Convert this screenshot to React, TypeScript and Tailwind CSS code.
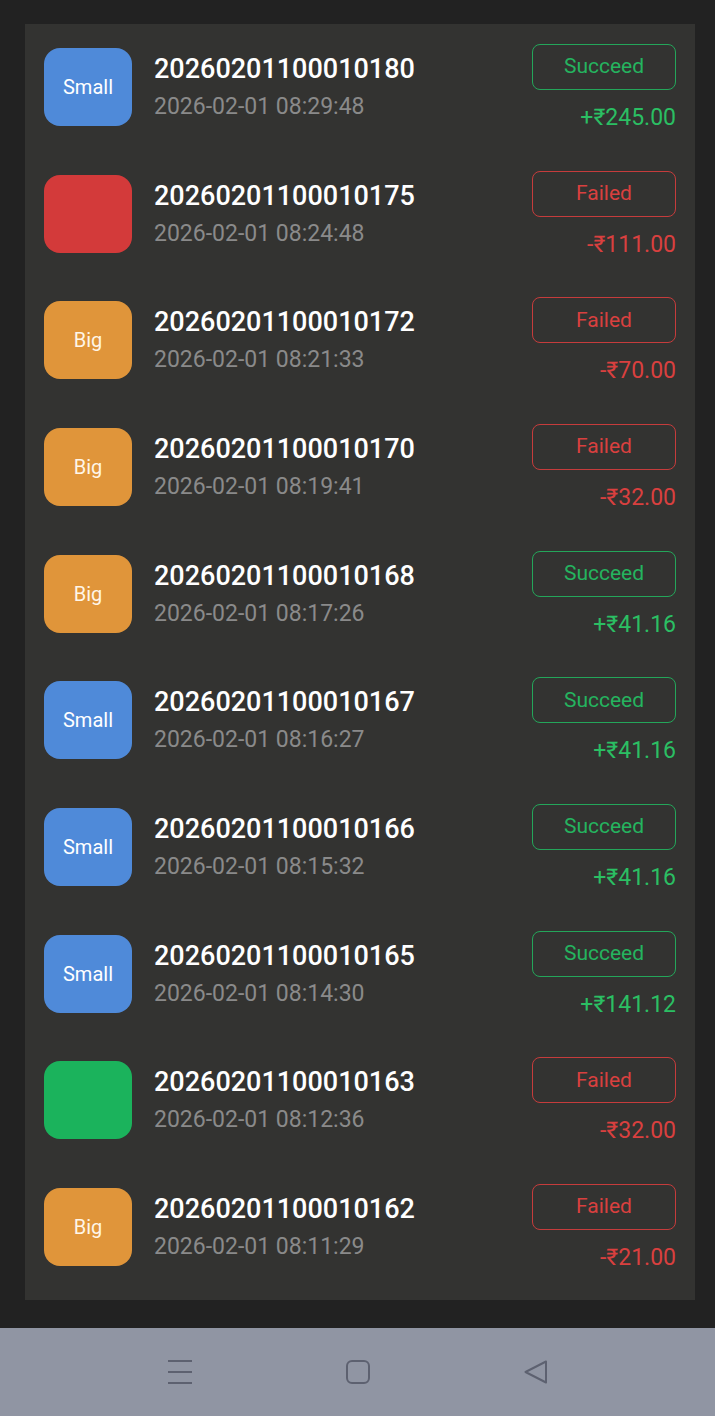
const rows = [
  { id: "20260201100010180", time: "2026-02-01 08:29:48", kind: "small", ok: true, amount: "+₹245.00" },
  { id: "20260201100010175", time: "2026-02-01 08:24:48", kind: "red", ok: false, amount: "-₹111.00" },
  { id: "20260201100010172", time: "2026-02-01 08:21:33", kind: "big", ok: false, amount: "-₹70.00" },
  { id: "20260201100010170", time: "2026-02-01 08:19:41", kind: "big", ok: false, amount: "-₹32.00" },
  { id: "20260201100010168", time: "2026-02-01 08:17:26", kind: "big", ok: true, amount: "+₹41.16" },
  { id: "20260201100010167", time: "2026-02-01 08:16:27", kind: "small", ok: true, amount: "+₹41.16" },
  { id: "20260201100010166", time: "2026-02-01 08:15:32", kind: "small", ok: true, amount: "+₹41.16" },
  { id: "20260201100010165", time: "2026-02-01 08:14:30", kind: "small", ok: true, amount: "+₹141.12" },
  { id: "20260201100010163", time: "2026-02-01 08:12:36", kind: "green", ok: false, amount: "-₹32.00" },
  { id: "20260201100010162", time: "2026-02-01 08:11:29", kind: "big", ok: false, amount: "-₹21.00" },
];

function Tile({ kind }: { kind: string }) {
  if (kind === "small")
    return (
      <div className="flex h-[78px] w-[88px] shrink-0 items-center justify-center rounded-[16px] bg-[#4f8ad9] text-[20px] text-white">
        Small
      </div>
    );
  if (kind === "big")
    return (
      <div className="flex h-[78px] w-[88px] shrink-0 items-center justify-center rounded-[16px] bg-[#e0953a] text-[20px] text-[#fff6e8]">
        Big
      </div>
    );
  if (kind === "red") return <div className="h-[78px] w-[88px] shrink-0 rounded-[16px] bg-[#d33a3a]" />;
  return <div className="h-[78px] w-[88px] shrink-0 rounded-[16px] bg-[#1bb35c]" />;
}

export default function App() {
  return (
    <div className="flex h-[1416px] w-[715px] flex-col bg-[#222222] font-['Roboto',sans-serif]">
      <div className="flex-1 pl-[25px] pr-[20px] pt-[24px]">
        <div className="h-[1276px] bg-[#333331] pb-[9px]">
          {rows.map((r) => (
            <div key={r.id} className="flex h-[126.67px] items-start pl-[19px] pr-[19px] pt-[24px]">
              <Tile kind={r.kind} />
              <div className="ml-[22px] flex flex-col">
                <div className="mt-[4px] text-[27px] font-medium leading-[34px] text-white">{r.id}</div>
                <div className="mt-[6px] text-[23px] leading-[30px] text-[#8a8a8a]">{r.time}</div>
              </div>
              <div className="ml-auto -mt-[4px] flex flex-col items-end">
                <div
                  className={
                    r.ok
                      ? "flex h-[46px] w-[144px] items-center justify-center rounded-[8px] border border-[#24a65a] text-[21px] text-[#25b45f]"
                      : "flex h-[46px] w-[144px] items-center justify-center rounded-[8px] border border-[#c63c3c] text-[21px] text-[#d9403f]"
                  }
                >
                  {r.ok ? "Succeed" : "Failed"}
                </div>
                <div
                  className={
                    r.ok
                      ? "mt-[13px] text-[23px] leading-[30px] text-[#2bbf63]"
                      : "mt-[13px] text-[23px] leading-[30px] text-[#d9403f]"
                  }
                >
                  {r.amount}
                </div>
              </div>
            </div>
          ))}
        </div>
      </div>
      <div className="flex h-[88px] items-center justify-center gap-[154px] bg-[#9095a3]">
        <svg width="24" height="24" viewBox="0 0 24 24" fill="none" stroke="#5d6170" strokeWidth="1.8">
          <path d="M0 1h24M0 12h24M0 23h24" />
        </svg>
        <svg width="24" height="24" viewBox="0 0 24 24" fill="none" stroke="#5d6170" strokeWidth="2">
          <rect x="1" y="1" width="22" height="22" rx="5" />
        </svg>
        <svg width="24" height="24" viewBox="0 0 24 24" fill="none" stroke="#5d6170" strokeWidth="2" strokeLinejoin="round">
          <path d="M22 1.5L1.5 12L22 22.5Z" />
        </svg>
      </div>
    </div>
  );
}
